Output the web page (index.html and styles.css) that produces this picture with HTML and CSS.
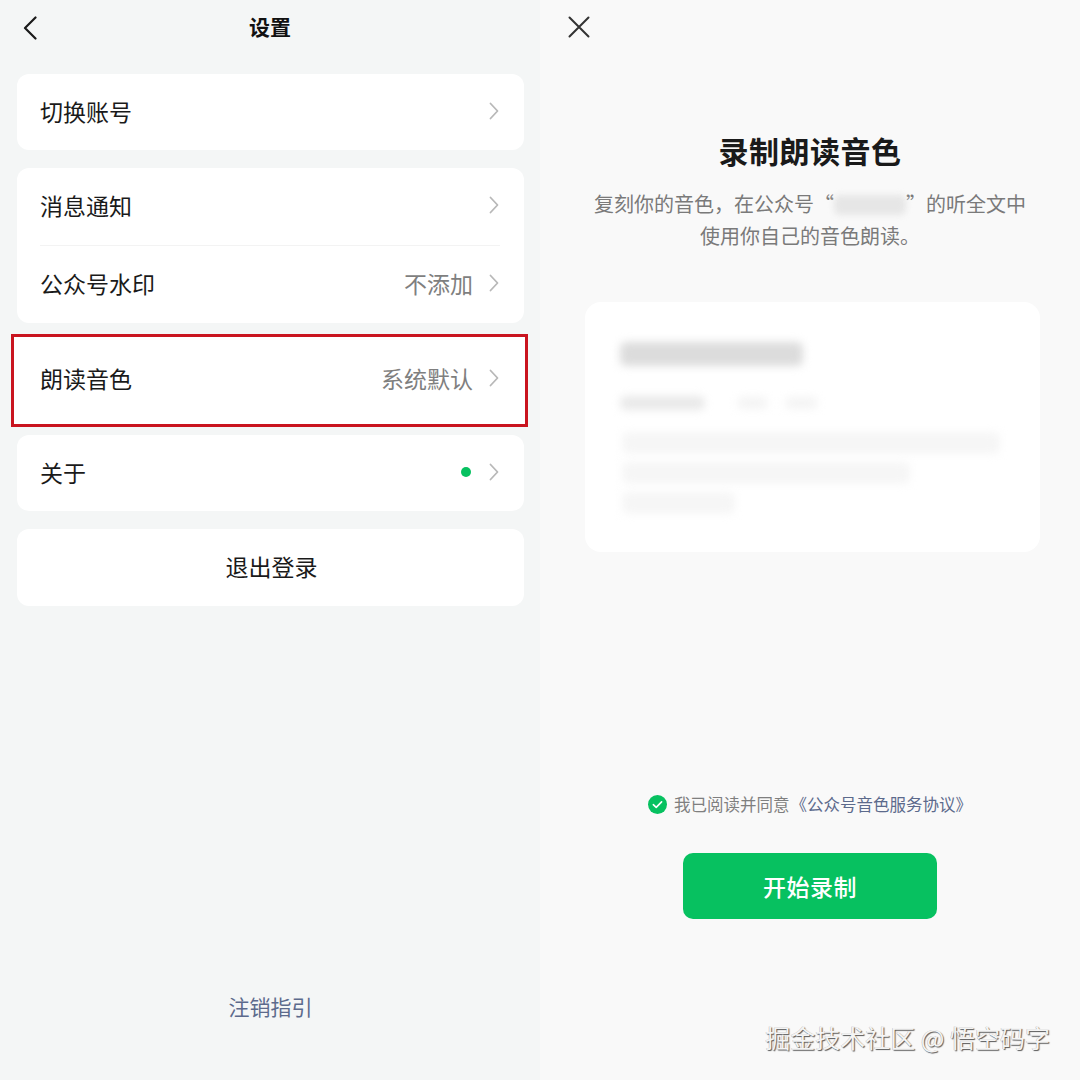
FILE: index.html
```html
<!DOCTYPE html>
<html lang="zh-CN">
<head>
<meta charset="utf-8">
<title>设置 / 录制朗读音色</title>
<link rel="stylesheet" href="styles.css">
</head>
<body>
<div class="screen">
  <section class="left">
    <header class="nav">
      <svg class="back" width="14" height="24" viewBox="0 0 14 24"><path d="M12.5 1.5 L2 12 L12.5 22.5" fill="none" stroke="#1a1a1a" stroke-width="2.2" stroke-linecap="round" stroke-linejoin="round"/></svg>
      <div class="nav-title">设置</div>
      <span></span>
    </header>
    <div class="groups">
      <div class="card">
        <div class="row"><span class="label">切换账号</span><svg class="chev" width="10" height="18" viewBox="0 0 10 18"><path d="M1.5 1.5 L8.5 9 L1.5 16.5" fill="none" stroke="#b8b8b8" stroke-width="1.8" stroke-linecap="round" stroke-linejoin="round"/></svg></div>
      </div>
      <div class="card">
        <div class="row tall"><span class="label">消息通知</span><svg class="chev" width="10" height="18" viewBox="0 0 10 18"><path d="M1.5 1.5 L8.5 9 L1.5 16.5" fill="none" stroke="#b8b8b8" stroke-width="1.8" stroke-linecap="round" stroke-linejoin="round"/></svg></div>
        <div class="divider"></div>
        <div class="row tall"><span class="label">公众号水印</span><span class="value">不添加</span><svg class="chev" width="10" height="18" viewBox="0 0 10 18"><path d="M1.5 1.5 L8.5 9 L1.5 16.5" fill="none" stroke="#b8b8b8" stroke-width="1.8" stroke-linecap="round" stroke-linejoin="round"/></svg></div>
      </div>
      <div class="card highlight">
        <div class="row"><span class="label">朗读音色</span><span class="value">系统默认</span><svg class="chev" width="10" height="18" viewBox="0 0 10 18"><path d="M1.5 1.5 L8.5 9 L1.5 16.5" fill="none" stroke="#b8b8b8" stroke-width="1.8" stroke-linecap="round" stroke-linejoin="round"/></svg></div>
      </div>
      <div class="card">
        <div class="row"><span class="label">关于</span><span class="dot"></span><svg class="chev" width="10" height="18" viewBox="0 0 10 18"><path d="M1.5 1.5 L8.5 9 L1.5 16.5" fill="none" stroke="#b8b8b8" stroke-width="1.8" stroke-linecap="round" stroke-linejoin="round"/></svg></div>
      </div>
      <div class="card">
        <div class="row center tall">退出登录</div>
      </div>
    </div>
    <a class="cancel">注销指引</a>
  </section>

  <section class="right">
    <svg class="close" width="22" height="22" viewBox="0 0 22 22"><path d="M1.5 1.5 L20.5 20.5 M20.5 1.5 L1.5 20.5" fill="none" stroke="#333" stroke-width="2" stroke-linecap="round"/></svg>
    <h1 class="title">录制朗读音色</h1>
    <p class="subtitle">复刻你的音色，在公众号“<span class="blurname"></span>”的听全文中<br>使用你自己的音色朗读。</p>
    <div class="sample">
      <div class="b b1"></div>
      <div class="brow">
        <div class="b b2"></div>
        <div class="b b3"></div>
        <div class="b b4"></div>
      </div>
      <div class="b l1"></div>
      <div class="b l2"></div>
      <div class="b l3"></div>
    </div>
    <div class="agree">
      <svg class="check" width="19" height="19" viewBox="0 0 19 19"><circle cx="9.5" cy="9.5" r="9.5" fill="#07c160"/><path d="M5.3 9.7 L8.2 12.4 L13.6 6.9" fill="none" stroke="#fff" stroke-width="1.6" stroke-linecap="round" stroke-linejoin="round"/></svg>
      <span class="agree-text">我已阅读并同意</span>
      <span class="agree-link">《公众号音色服务协议》</span>
    </div>
    <button class="start">开始录制</button>
    <div class="watermark">掘金技术社区 @ 悟空码字</div>
  </section>
</div>
</body>
</html>
```

FILE: styles.css
```css
* { box-sizing: border-box; }

body {
  margin: 0;
  font-family: "Noto Sans CJK SC", "Noto Sans", sans-serif;
  color: #1a1a1a;
}

.screen {
  display: flex;
  width: 1080px;
  height: 1080px;
  overflow: hidden;
}

/* ---------- left: settings ---------- */
.left {
  width: 540px;
  background: #f4f6f6;
  display: flex;
  flex-direction: column;
  isolation: isolate;
}

.nav {
  height: 54px;
  display: grid;
  grid-template-columns: 1fr auto 1fr;
  align-items: center;
}

.back {
  margin-left: 23px;
  margin-top: 1px;
}

.nav-title {
  font-size: 21px;
  font-weight: 700;
  line-height: 30px;
  color: #111;
  padding-bottom: 2px;
}

.groups {
  padding: 20px 16px 0 17px;
  display: flex;
  flex-direction: column;
  gap: 18px;
}

.card {
  background: #fff;
  border-radius: 12px;
}

.card.highlight {
  position: relative;
}

.card.highlight::before {
  content: "";
  position: absolute;
  top: -7px;
  left: -6px;
  right: -4px;
  bottom: -10px;
  border: 3px solid #c9141f;
  background: #fff;
  z-index: -1;
}

.row {
  display: flex;
  align-items: center;
  height: 76px;
  padding: 0 25px 3px 23px;
  font-size: 23px;
  line-height: 30px;
}

.row.tall { height: 77px; }

.row.center {
  justify-content: center;
  padding: 0 0 3px 2px;
}

.label { flex: 1; }

.value {
  color: #7f7f7f;
  margin-right: 16px;
}

.dot {
  width: 10px;
  height: 10px;
  border-radius: 50%;
  background: #07c160;
  margin-right: 18px;
}

.chev { flex: none; }

.divider {
  height: 1px;
  background: #f3f3f3;
  margin: 0 24px 0 23px;
}

.cancel {
  margin-top: auto;
  margin-bottom: 59px;
  align-self: center;
  font-size: 21px;
  line-height: 30px;
  color: #5c6a8c;
  padding-left: 1px;
}

/* ---------- right: record voice ---------- */
.right {
  position: relative;
  width: 540px;
  background: #f9f9f9;
  display: flex;
  flex-direction: column;
  align-items: center;
}

.close {
  align-self: flex-start;
  margin: 16px 0 0 28px;
}

.title {
  margin: 92px 0 0;
  font-size: 30px;
  line-height: 40px;
  font-weight: 700;
  color: #1a1a1a;
  letter-spacing: 0.5px;
}

.subtitle {
  margin: 18px 0 0;
  font-size: 20px;
  line-height: 32px;
  color: #7a7a7a;
  text-align: center;
}

.blurname {
  display: inline-block;
  width: 72px;
  height: 20px;
  vertical-align: -3px;
  background: #e6e6e6;
  border-radius: 6px;
  filter: blur(3px);
}

.sample {
  align-self: flex-start;
  margin: 50px 0 0 45px;
  width: 455px;
  height: 250px;
  background: #fff;
  border-radius: 16px;
  padding: 40px 0 0 35px;
  display: flex;
  flex-direction: column;
}

.b {
  filter: blur(4px);
  border-radius: 6px;
}

.b1 {
  width: 183px;
  height: 24px;
  background: #dcdcdc;
}

.brow {
  display: flex;
  align-items: center;
  margin-top: 30px;
}

.b2 {
  width: 85px;
  height: 14px;
  background: #e9e9e9;
}

.b3 {
  width: 31px;
  height: 12px;
  margin-left: 32px;
  background: #f4f4f4;
}

.b4 {
  width: 33px;
  height: 12px;
  margin-left: 17px;
  background: #f4f4f4;
}

.l1, .l2, .l3 {
  height: 22px;
  background: #f6f6f6;
  margin-left: 2px;
}

.l1 { width: 378px; margin-top: 22px; }
.l2 { width: 288px; margin-top: 8px; }
.l3 { width: 113px; margin-top: 8px; }

.agree {
  margin-top: 240px;
  display: flex;
  align-items: center;
  font-size: 16.5px;
  line-height: 24px;
}

.check { margin-right: 7px; }

.agree-text {
  color: #7f7f7f;
  margin-right: 1px;
}

.agree-link { color: #5c6a8c; }

.start {
  margin-top: 37px;
  width: 254px;
  height: 66px;
  border: none;
  border-radius: 10px;
  background: #07c160;
  color: #fff;
  font-family: inherit;
  font-size: 23px;
  font-weight: 500;
  letter-spacing: 0.5px;
  padding-bottom: 2px;
}

.watermark {
  position: absolute;
  right: 30px;
  bottom: 28px;
  font-size: 25px;
  line-height: 30px;
  color: #f4f4f4;
  text-shadow: 1px 1px 1px rgba(0, 0, 0, 0.65), -0.5px -0.5px 0 rgba(0, 0, 0, 0.25);
}
```
